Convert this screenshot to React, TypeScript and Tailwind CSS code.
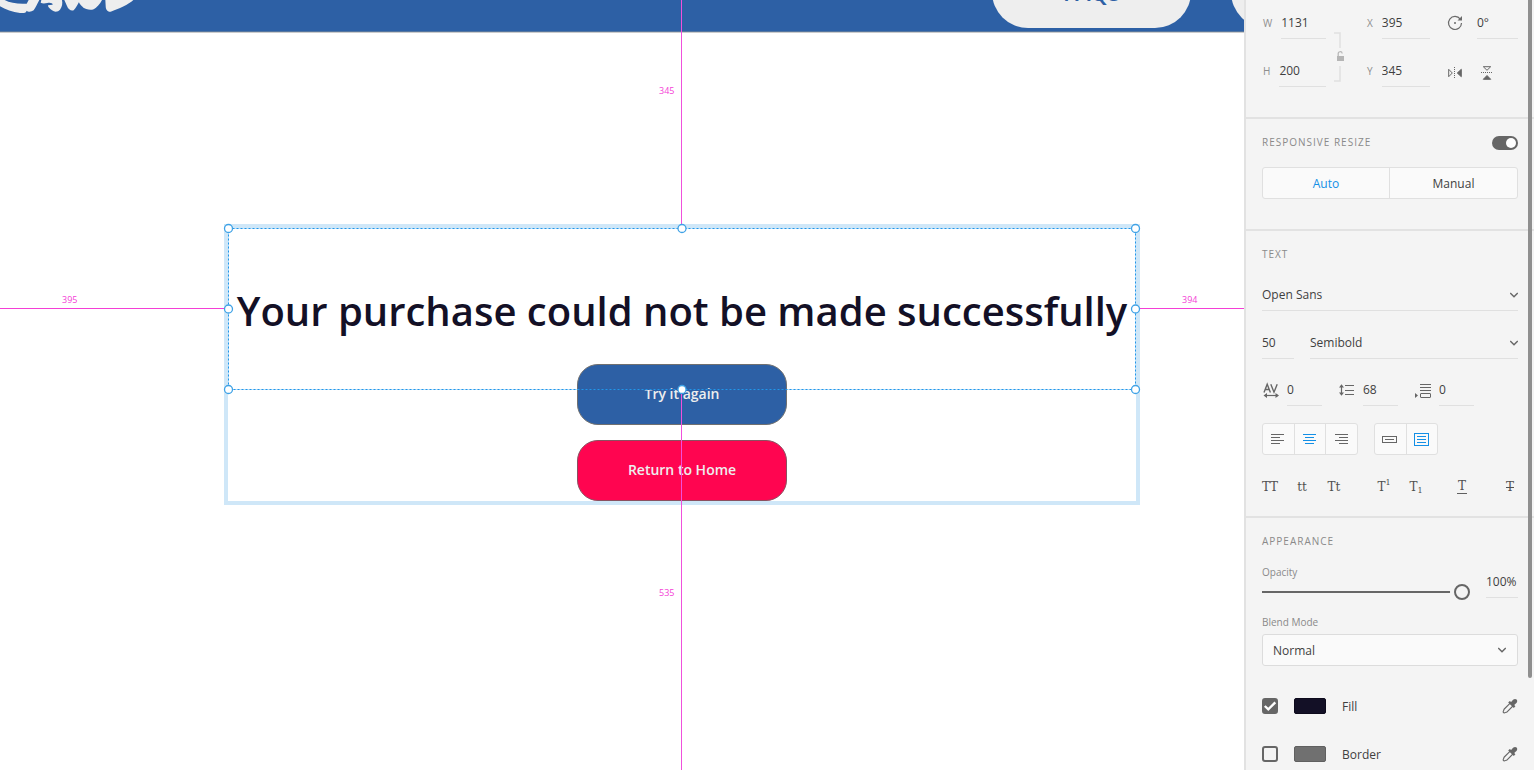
import { useState, type ReactNode } from 'react';

const fieldText = 'text-[12px] leading-4 text-[#3f3f3f] bg-transparent outline-none';
const underline = 'h-8 border-b border-[#e0e0e0]';

function NumberField({ label, value }: { label: string; value: string }) {
  return (
    <label className="flex items-center gap-[9px]">
      <span className="pl-px text-[10px] leading-4 text-[#8e8e8e]">{label}</span>
      <input className={`w-0 min-w-0 flex-1 ${underline} ${fieldText}`} defaultValue={value} />
    </label>
  );
}

function IconField({ label, value, icon }: { label: string; value: string; icon: ReactNode }) {
  return (
    <label className="flex w-15 items-center justify-between" aria-label={label}>
      {icon}
      <input className={`w-[35px] ${underline} ${fieldText}`} defaultValue={value} />
    </label>
  );
}

function Chevron({ className }: { className: string }) {
  return (
    <svg
      className={`pointer-events-none col-start-1 row-start-1 self-center justify-self-end ${className}`}
      width="8"
      height="6"
      viewBox="0 0 8 6"
      fill="none"
      stroke="#666"
      strokeWidth="1.5"
    >
      <path d="M.2 1 4 4.800 7.800 1" />
    </svg>
  );
}

function SectionTitle({ children }: { children: ReactNode }) {
  return <h2 className="text-[10px] leading-[14px] tracking-[1px] text-[#8a8a8a]">{children}</h2>;
}

function Eyedropper() {
  return (
    <svg width="16" height="16" viewBox="0 0 16 16" fill="none">
      <path d="M8.2 5.2 2.3 11c-.6.6-.4 1.2-.9 2-.4.7-.2 1.500.4 1.800.5.2 1 .1 1.500-.2.7-.4 1.200-.2 1.800-.8l5.800-5.800" stroke="#666" strokeWidth="1.100" />
      <path d="M6.200 4.500 7.800 2.900l1.300 1.100 2-2.200c1-1.100 2.600-1.200 3.500-.3.900 1 .800 2.500-.2 3.500L12.200 7l1.200 1.300-1.600 1.600z" fill="#666" />
    </svg>
  );
}

function PaintRow({ name, swatch, initial }: { name: string; swatch: string; initial: boolean }) {
  const [on, setOn] = useState(initial);
  const id = name.toLowerCase();
  return (
    <div className="flex h-4 items-center">
      <span className="grid size-4">
        <input
          id={id}
          type="checkbox"
          checked={on}
          onChange={() => setOn(!on)}
          className="col-start-1 row-start-1 size-4 appearance-none rounded-[3px] border-2 border-[#666] checked:bg-[#666]"
        />
        {on && (
          <svg className="pointer-events-none col-start-1 row-start-1" width="16" height="16" viewBox="0 0 16 16" fill="none">
            <path d="M2.800 8 6.300 11.300 13.300 4.300" stroke="#fff" strokeWidth="2.400" />
          </svg>
        )}
      </span>
      <button aria-label={`${name} color`} className={`ml-4 h-4 w-8 rounded-[2px] border ${swatch}`} />
      <label htmlFor={id} className="ml-4 flex-1 pt-[2px] text-[12px] leading-4 text-[#3f3f3f]">
        {name}
      </label>
      <button aria-label={`Pick ${id} color`}>
        <Eyedropper />
      </button>
    </div>
  );
}

function AlignIcon({ lines, color }: { lines: number[][]; color: string }) {
  return (
    <svg width="14" height="12" viewBox="0 0 14 12" stroke={color}>
      {lines.map(([from, to], i) => (
        <path key={i} d={`M${from} ${i * 3 + 1.5}H${to}`} />
      ))}
    </svg>
  );
}

function Logo() {
  return (
    <svg className="ml-[90px] self-start" width="136" height="14" viewBox="0 0 408 42" fill="#eee">
      <path d="M0 0H14C30 9 56 13 80 11L86 0H118C112 11 107 22 101 31C94 36 84 36 80 32C78 39 70 40 60 39C38 37 16 29 0 19Z" />
      <path d="M124 0H186C188 10 187 20 180 29C174 36 164 37 156 31C149 26 144 22 144 16L158 14C158 9 150 7 142 9C134 11 126 11 122 8Z" />
      <path d="M193 0H240C234 12 228 24 221 31C213 34 205 28 201 18Z" />
      <path d="M234 0H306C300 12 290 23 281 28C270 32 256 28 249 22C241 15 236 8 234 0Z" />
      <path d="M316 0H400C386 13 356 27 332 35C322 36 317 28 317 17Z" />
    </svg>
  );
}

function Artboard() {
  return (
    <div className="-ml-[90px] w-[1544px] text-[#131026]">
      <header className="flex h-8 items-end justify-between overflow-hidden border-b border-[#57779f] bg-[#2d60a5] pr-6 pb-[3px]">
        <Logo />
        <nav className="flex gap-10">
          <a href="#faqs" className="flex h-[72px] w-[199px] items-center justify-center rounded-full bg-[#eee] text-[23px] leading-8 font-semibold text-[#2d60a5]">
            FAQs
          </a>
          <span className="h-[72px] w-[199px] rounded-full bg-[#eee]" />
        </nav>
      </header>
      <div className="border-t border-[#ccc]" />
      <div className="relative mx-auto mt-[191px] flex w-[916px] flex-col items-center border-4 border-[#cfe7f8] pt-14">
        <h1 className="text-[40px] leading-[54px] font-semibold whitespace-nowrap">
          Your purchase could not be made successfully
        </h1>
        <div className="mt-[26px] flex w-[210px] flex-col gap-[15px] text-[14px] leading-5 font-semibold text-[#eee] *:h-[61px] *:rounded-[21px] *:border *:pb-[2px]">
          <button className="border-[#707070] bg-[#2d60a5]">Try it again</button>
          <button className="border-[#8a5060] bg-[#ff0550]">Return to Home</button>
        </div>
        <SelectionOverlay />
      </div>
    </div>
  );
}

function SelectionOverlay() {
  return (
    <div className="pointer-events-none absolute inset-0 text-[9px] leading-3 text-[#f43fd6]">
      <div className="absolute -top-[228px] left-[453px] h-[224px] w-px bg-[#f050dc]" />
      <div className="absolute top-[162px] left-[453px] h-[600px] w-px bg-[#f050dc]" />
      <div className="absolute top-20 -left-[318px] h-px w-[314px] bg-[#f43fd6]" />
      <div className="absolute top-20 left-[912px] h-px w-[314px] bg-[#f43fd6]" />
      <span className="absolute -top-[143px] left-[431px]">345</span>
      <span className="absolute top-[359px] left-[431px]">535</span>
      <span className="absolute top-[66px] -left-[166px]">395</span>
      <span className="absolute top-[66px] left-[954px]">394</span>
      <svg className="absolute top-0 left-0 h-[161px] w-[calc(100%-1px)] overflow-visible" fill="none">
        <g transform="translate(.5 .5)">
          <rect width="100%" height="100%" stroke="#c4e4f9" />
          <path d="M349 161H558" stroke="#2d60a5" />
          <rect width="100%" height="100%" stroke="#2196ea" strokeDasharray="2 2" />
          <g fill="#fff" stroke="#3fa2e6" strokeWidth="1.300">
            <circle cx="0" cy="0" r="4" />
            <circle cx="50%" cy="0" r="4" />
            <circle cx="100%" cy="0" r="4" />
            <circle cx="0" cy="50%" r="4" />
            <circle cx="100%" cy="50%" r="4" />
            <circle cx="0" cy="100%" r="4" />
            <circle cx="50%" cy="100%" r="4" />
            <circle cx="100%" cy="100%" r="4" />
          </g>
        </g>
      </svg>
    </div>
  );
}

function TransformSection() {
  return (
    <section className="flex h-[119px] border-b-2 border-[#e2e2e2] px-4 pt-[7px]">
      <div className="flex w-16 flex-col gap-4">
        <NumberField label="W" value="1131" />
        <NumberField label="H" value="200" />
      </div>
      <svg className="mt-[25px] ml-[7px]" width="12" height="50" viewBox="0 0 12 50" fill="none">
        <path d="M1 1H7V16M7 34V49H1" stroke="#e0e0e0" strokeWidth="1.500" />
        <path d="M4 24h7v5H4z" fill="#b5b5b5" />
        <path d="M5.200 24v-2a2 2 0 0 1 4-.5" stroke="#b5b5b5" strokeWidth="1.200" />
      </svg>
      <div className="ml-[21px] flex w-16 flex-col gap-4">
        <NumberField label="X" value="395" />
        <NumberField label="Y" value="345" />
      </div>
      <div className="ml-[17px] flex flex-1 flex-col gap-4">
        <label className="flex items-center gap-[14px]" aria-label="Rotation">
          <svg width="16" height="16" viewBox="0 0 16 16" fill="none" stroke="#6a6a6a" strokeWidth="1.200">
            <path d="M13.300 4.200A6.500 6.500 0 1 0 14.500 8" />
            <path d="M15 1V5.500H10.500z" fill="#6a6a6a" stroke="none" />
            <circle cx="8" cy="8" r="1" fill="#6a6a6a" stroke="none" />
          </svg>
          <input className={`w-0 min-w-0 flex-1 ${underline} ${fieldText}`} defaultValue="0°" />
        </label>
        <div className="flex h-8 items-center gap-[19px] pt-[3px] pl-px">
          <button aria-label="Flip horizontally">
            <svg width="14" height="12" viewBox="0 0 14 12" fill="none" stroke="#666">
              <path d="M.7 2.300v7.400L4.300 6z" />
              <path d="M13.300 2.300v7.400L9.300 6z" fill="#666" />
              <path d="M6.500 0v12" strokeDasharray="1 1" />
            </svg>
          </button>
          <button aria-label="Flip vertically">
            <svg width="12" height="14" viewBox="0 0 12 14" fill="none" stroke="#666">
              <path d="M2.300 .7h7.400L6 4.300z" />
              <path d="M2.300 13.300h7.400L6 9.500z" fill="#666" />
              <path d="M0 6.500h12" strokeDasharray="1 1" />
            </svg>
          </button>
        </div>
      </div>
    </section>
  );
}

function ResizeSection() {
  const [on, setOn] = useState(true);
  return (
    <section className="border-b-2 border-[#e2e2e2] px-4 pt-4 pb-[30px]">
      <div className="flex h-4 items-start justify-between">
        <SectionTitle>RESPONSIVE RESIZE</SectionTitle>
        <button
          role="switch"
          aria-checked={on}
          aria-label="Responsive resize"
          onClick={() => setOn(!on)}
          className={`flex h-[14px] w-[26px] items-center self-center rounded-full bg-[#666] px-[2px] ${on ? 'justify-end' : 'justify-start'}`}
        >
          <span className="size-[10px] rounded-full bg-white" />
        </button>
      </div>
      <div className="mt-4 grid h-8 grid-cols-2 divide-x divide-[#e0e0e0] rounded-[3px] border border-[#e0e0e0] bg-[#fafafa] text-[12px] text-[#3f3f3f] *:pt-[2px]">
        <button className="text-[#1490e6]">Auto</button>
        <button>Manual</button>
      </div>
    </section>
  );
}

const caseButton = 'flex h-4 w-4 items-center justify-center whitespace-nowrap';

function TextSection() {
  return (
    <section className="border-b-2 border-[#e2e2e2] px-4 pt-4 pb-[21px]">
      <SectionTitle>TEXT</SectionTitle>
      <div className="mt-[18px] grid">
        <select aria-label="Font family" className={`col-start-1 row-start-1 appearance-none ${underline} ${fieldText}`}>
          <option>Open Sans</option>
        </select>
        <Chevron className="" />
      </div>
      <div className="mt-4 flex gap-4">
        <input aria-label="Font size" className={`w-8 ${underline} ${fieldText}`} defaultValue="50" />
        <div className="grid flex-1">
          <select aria-label="Font weight" className={`col-start-1 row-start-1 appearance-none ${underline} ${fieldText}`}>
            <option>Semibold</option>
          </select>
          <Chevron className="" />
        </div>
      </div>
      <div className="mt-[15px] flex gap-4">
        <IconField
          label="Character spacing"
          value="0"
          icon={
            <svg width="18" height="16" viewBox="0 0 18 16" fill="none" stroke="#666" strokeWidth="1.400">
              <path d="M2 10.500 5.200 2.200 8.400 10.500M3.200 7.500h4M8.800 2.200l3.200 8 3.200-8" />
              <path d="M3 13.500h13" strokeWidth="1.200" />
              <path d="M5 11v5L1.500 13.500zM13.500 11v5l3.500-2.500z" fill="#666" stroke="none" />
            </svg>
          }
        />
        <IconField
          label="Line spacing"
          value="68"
          icon={
            <svg width="17" height="12" viewBox="0 0 17 12" fill="none" stroke="#666">
              <path d="M7 1.500h9M7 6.500h9M7 10.500h9" strokeWidth="1.100" />
              <path d="M3.500 2v8" strokeWidth="1.200" />
              <path d="M1 3.500 3.500 .3 6 3.500zM1 8.500 3.500 11.700 6 8.500z" fill="#666" stroke="none" />
            </svg>
          }
        />
        <IconField
          label="Paragraph spacing"
          value="0"
          icon={
            <svg width="17" height="15" viewBox="0 0 17 15" fill="none" stroke="#666">
              <path d="M6 1.500h11M6 4.500h11M6 7.500h11" />
              <rect x="6.500" y="10.500" width="10" height="4" rx=".5" />
              <path d="M1 10v5l3-2.500z" fill="#666" stroke="none" />
            </svg>
          }
        />
      </div>
      <div className="mt-[17px] flex gap-4">
        <div className="flex h-8 w-24 divide-x divide-[#e0e0e0] rounded-[3px] border border-[#e0e0e0] bg-[#fafafa] *:flex *:flex-1 *:items-center *:justify-center">
          <button aria-label="Align left">
            <AlignIcon color="#666" lines={[[0, 13], [0, 9], [0, 13], [0, 9]]} />
          </button>
          <button aria-label="Align center">
            <AlignIcon color="#1490e6" lines={[[0, 13], [2, 11], [0, 13], [2, 11]]} />
          </button>
          <button aria-label="Align right">
            <AlignIcon color="#666" lines={[[0, 13], [4, 13], [0, 13], [4, 13]]} />
          </button>
        </div>
        <div className="flex h-8 w-16 divide-x divide-[#e0e0e0] rounded-[3px] border border-[#e0e0e0] bg-[#fafafa] *:flex *:flex-1 *:items-center *:justify-center">
          <button aria-label="Point text">
            <svg width="16" height="7" viewBox="0 0 16 7" fill="none" stroke="#666">
              <rect x=".5" y=".5" width="14" height="6" />
              <path d="M3 3.500h9" />
            </svg>
          </button>
          <button aria-label="Area text">
            <svg width="15" height="13" viewBox="0 0 15 13" fill="none" stroke="#1490e6">
              <rect x=".5" y=".5" width="14" height="12" />
              <path d="M3 3.500h9M3 6.500h9M3 9.500h9" />
            </svg>
          </button>
        </div>
      </div>
      <div className="mt-6 flex h-4 text-[12px] leading-4 text-[#505050] [font-family:'DejaVu_Serif',serif]">
        <button className={caseButton}>TT</button>
        <button className={`ml-4 ${caseButton}`}>tt</button>
        <button className={`ml-4 ${caseButton}`}>Tt</button>
        <button className={`ml-[34px] ${caseButton}`}>
          T<span className="self-start text-[8px] leading-2">1</span>
        </button>
        <button className={`ml-4 ${caseButton}`}>
          T<span className="self-end text-[8px] leading-2">1</span>
        </button>
        <button className={`ml-[30px] ${caseButton}`}>
          <span className="border-b border-[#606060] px-px leading-[13px]">T</span>
        </button>
        <button className={`ml-8 ${caseButton}`}>
          <span className="line-through">T</span>
        </button>
      </div>
    </section>
  );
}

function AppearanceSection() {
  return (
    <section className="px-4 pt-4">
      <SectionTitle>APPEARANCE</SectionTitle>
      <div className="mt-[18px] flex gap-4">
        <div className="flex flex-1 flex-col gap-[6px]">
          <label htmlFor="opacity" className="text-[10px] leading-3 text-[#8a8a8a]">
            Opacity
          </label>
          <input
            id="opacity"
            type="range"
            defaultValue={100}
            className="h-4 w-full appearance-none bg-transparent [&::-webkit-slider-runnable-track]:h-[2px] [&::-webkit-slider-runnable-track]:bg-[#666] [&::-webkit-slider-thumb]:-mt-[7px] [&::-webkit-slider-thumb]:size-4 [&::-webkit-slider-thumb]:appearance-none [&::-webkit-slider-thumb]:rounded-full [&::-webkit-slider-thumb]:border-2 [&::-webkit-slider-thumb]:border-[#666] [&::-webkit-slider-thumb]:bg-[#f4f4f4] [&::-webkit-slider-thumb]:shadow-[0_0_0_4px_#f4f4f4]"
          />
        </div>
        <input aria-label="Opacity value" className={`w-8 ${underline} ${fieldText}`} defaultValue="100%" />
      </div>
      <label htmlFor="blend" className="mt-4 block text-[10px] leading-3 text-[#8a8a8a]">
        Blend Mode
      </label>
      <div className="mt-[6px] grid">
        <select
          id="blend"
          className="col-start-1 row-start-1 h-8 appearance-none rounded-[3px] border border-[#dcdcdc] bg-[#fafafa] px-[10px] pt-[2px] text-[12px] text-[#3f3f3f]"
        >
          <option>Normal</option>
        </select>
        <Chevron className="mr-3" />
      </div>
      <div className="mt-8 flex flex-col gap-8">
        <PaintRow name="Fill" swatch="border-[#0d0a1c] bg-[#131026]" initial />
        <PaintRow name="Border" swatch="border-[#606060] bg-[#707070]" initial={false} />
      </div>
    </section>
  );
}

export default function App() {
  return (
    <div className="flex h-screen overflow-hidden bg-white [font-family:'Open_Sans','Noto_Sans',sans-serif]">
      <main className="min-w-0 flex-1 overflow-hidden">
        <Artboard />
      </main>
      <aside className="relative w-[290px] shrink-0 overflow-hidden border-l-2 border-[#e2e2e2] bg-[#f4f4f4]">
        <TransformSection />
        <ResizeSection />
        <TextSection />
        <AppearanceSection />
        <div className="absolute top-0 right-[2px] h-[88%] w-1 rounded-b-full bg-[#8f8f8f]" />
      </aside>
    </div>
  );
}
